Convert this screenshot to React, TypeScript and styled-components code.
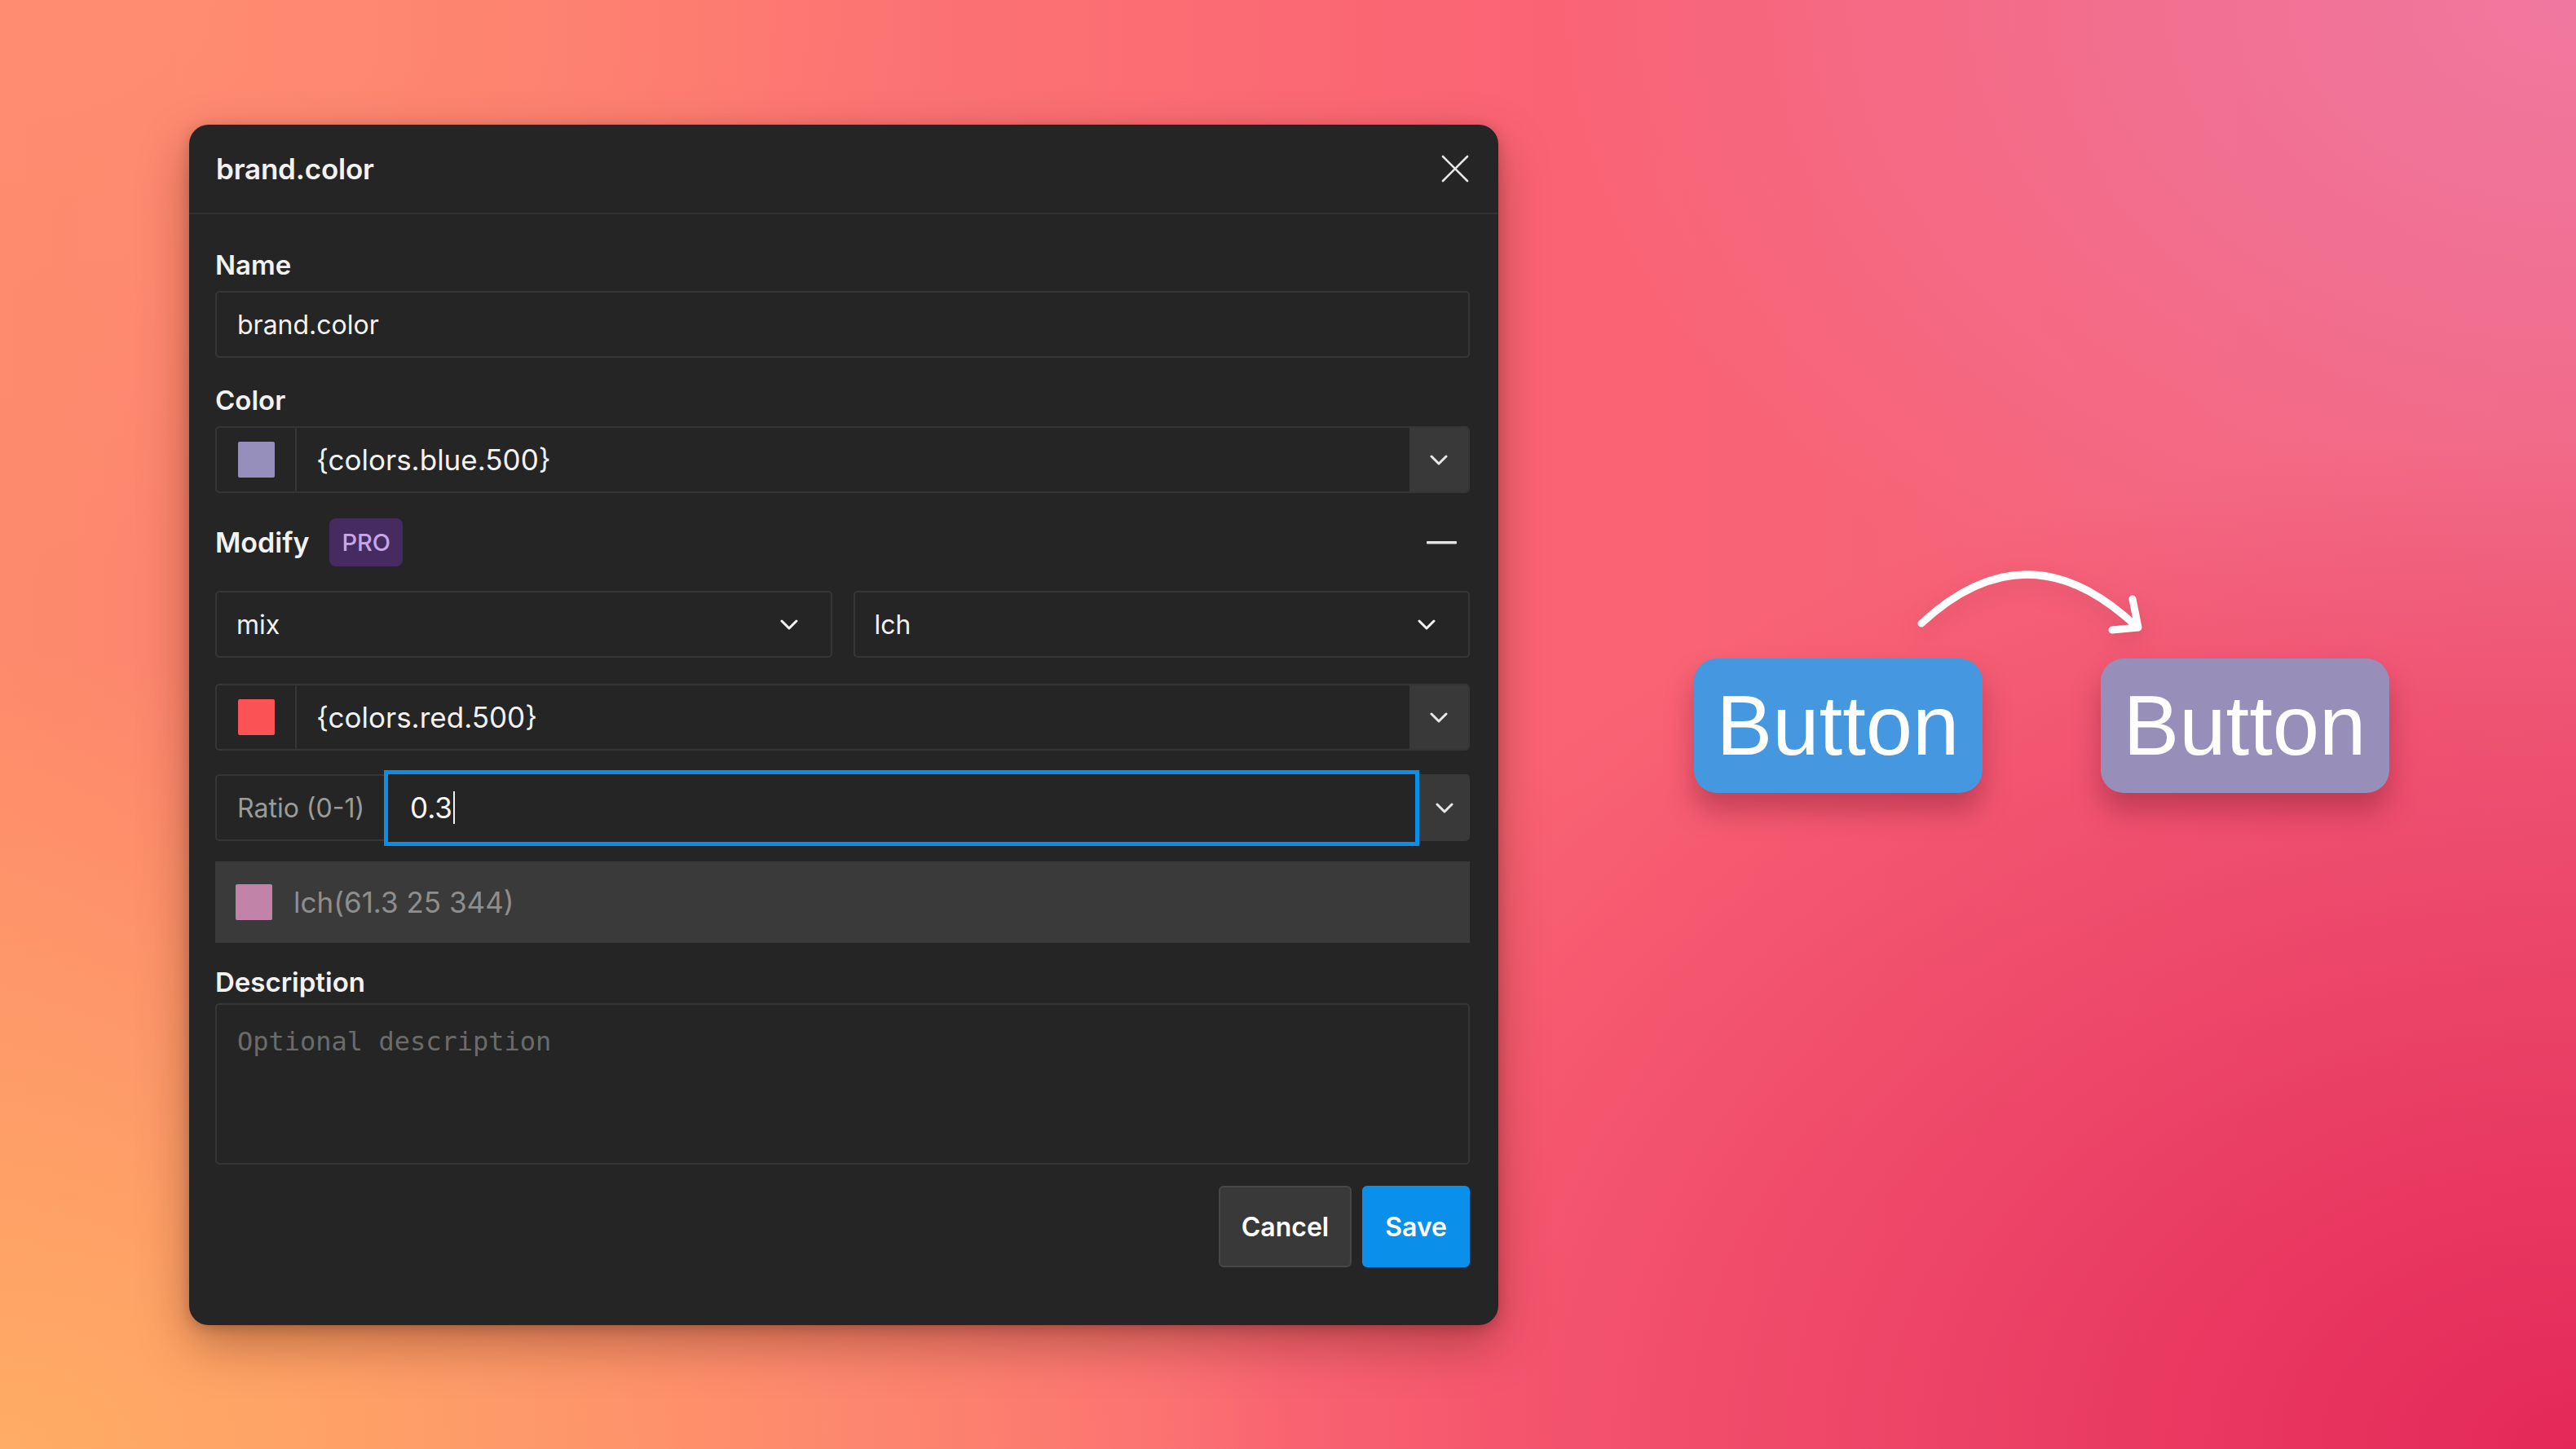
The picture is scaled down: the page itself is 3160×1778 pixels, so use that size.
import React from "react";
import styled, { createGlobalStyle } from "styled-components";

const GlobalStyle = createGlobalStyle`
  html, body { margin: 0; padding: 0; }
  body { font-family: Inter, "Noto Sans", "Liberation Sans", sans-serif; }
  * { box-sizing: border-box; }
`;

const Page = styled.div`
  width: 3160px;
  height: 1778px;
  overflow: hidden;
  display: flex;
  align-items: flex-start;
  padding: 153px 0 0 232px;
  background:
    radial-gradient(ellipse 50% 55% at 0% 100%, rgba(255, 172, 100, 1) 0%, rgba(255, 172, 100, 0) 100%),
    radial-gradient(ellipse 55% 70% at 100% 100%, rgba(228, 40, 88, 1) 0%, rgba(228, 40, 88, 0) 100%),
    radial-gradient(ellipse 40% 50% at 100% 0%, rgba(240, 120, 160, 1) 0%, rgba(240, 120, 160, 0) 100%),
    radial-gradient(ellipse 35% 40% at 0% 0%, rgba(255, 140, 112, 1) 0%, rgba(255, 140, 112, 0) 100%),
    linear-gradient(90deg, #fd8a6c 0%, #fc7672 30%, #fa6374 60%, #f2637c 100%);
`;

const Dialog = styled.div`
  width: 1606px;
  background: #252525;
  border-radius: 24px;
  box-shadow: 0 24px 60px rgba(70, 20, 10, 0.35), 0 4px 16px rgba(0, 0, 0, 0.2);
  display: flex;
  flex-direction: column;
  overflow: hidden;
`;

const Header = styled.div`
  height: 110px;
  display: flex;
  align-items: center;
  justify-content: space-between;
  padding: 0 36px 0 33px;
  border-bottom: 2px solid #323232;
`;

const Title = styled.div`
  color: #f2f2f2;
  font-size: 35px;
  font-weight: 600;
  letter-spacing: -0.2px;
`;

const IconButton = styled.div`
  display: flex;
  align-items: center;
  justify-content: center;
  color: #e6e6e6;
`;

const Body = styled.div`
  display: flex;
  flex-direction: column;
  padding: 42px 35px 71px 32px;
`;

const FieldLabel = styled.div<{ $mt?: number }>`
  margin-top: ${(p) => p.$mt ?? 0}px;
  color: #f2f2f2;
  font-size: 33px;
  font-weight: 600;
  line-height: 40px;
`;

const TextInput = styled.input<{ $mt?: number }>`
  margin-top: ${(p) => p.$mt ?? 0}px;
  height: 82px;
  width: 100%;
  background: #252525;
  border: 2px solid #363636;
  border-radius: 5px;
  padding: 0 25px;
  color: #f2f2f2;
  font-family: Inter, "Noto Sans", sans-serif;
  font-size: 32px;
  outline: none;
`;

const ComboField = styled.div<{ $mt?: number }>`
  margin-top: ${(p) => p.$mt ?? 0}px;
  height: 82px;
  display: flex;
  align-items: stretch;
  border: 2px solid #363636;
  border-radius: 5px;
  overflow: hidden;
`;

const SwatchCell = styled.div`
  width: 98px;
  display: flex;
  align-items: center;
  justify-content: center;
  border-right: 2px solid #363636;
`;

const Swatch = styled.div<{ $color: string }>`
  width: 45px;
  height: 44px;
  border-radius: 2px;
  background: ${(p) => p.$color};
`;

const ValueText = styled.div`
  flex: 1;
  display: flex;
  align-items: center;
  padding-left: 24px;
  color: #f2f2f2;
  font-size: 35px;
`;

const DropCell = styled.div<{ $w: number }>`
  width: ${(p) => p.$w}px;
  background: #393939;
  display: flex;
  align-items: center;
  justify-content: center;
  color: #e8e8e8;
`;

const ModifyRow = styled.div<{ $mt?: number }>`
  margin-top: ${(p) => p.$mt ?? 0}px;
  height: 59px;
  display: flex;
  align-items: center;
  justify-content: space-between;
`;

const ModifyLeft = styled.div`
  display: flex;
  align-items: center;
  gap: 25px;
`;

const ModifyTitle = styled.div`
  color: #f2f2f2;
  font-size: 34px;
  font-weight: 600;
`;

const ProBadge = styled.div`
  height: 59px;
  padding: 0 15px;
  border-radius: 8px;
  background: #452b5f;
  color: #c9a6e8;
  font-size: 29px;
  font-weight: 500;
  display: flex;
  align-items: center;
`;

const MinusButton = styled.div`
  margin-right: 16px;
  display: flex;
  align-items: center;
`;

const SelectRow = styled.div<{ $mt?: number }>`
  margin-top: ${(p) => p.$mt ?? 0}px;
  display: grid;
  grid-template-columns: 1fr 1fr;
  gap: 26px;
`;

const Select = styled.div`
  height: 82px;
  border: 2px solid #363636;
  border-radius: 5px;
  display: flex;
  align-items: center;
  justify-content: space-between;
  padding: 0 40px 0 24px;
  color: #f2f2f2;
  font-size: 32px;
`;

const RatioRow = styled.div<{ $mt?: number }>`
  margin-top: ${(p) => p.$mt ?? 0}px;
  height: 82px;
  display: flex;
  align-items: center;
`;

const RatioLabel = styled.div`
  width: 207px;
  height: 82px;
  border: 2px solid #363636;
  border-right: none;
  border-radius: 5px 0 0 5px;
  display: flex;
  align-items: center;
  padding-left: 25px;
  color: #9b9b9b;
  font-size: 32px;
`;

const FocusedInput = styled.div`
  flex: 1;
  height: 93px;
  border: 5px solid #0a8fe9;
  background: #252525;
  display: flex;
  align-items: center;
  padding-left: 27px;
  color: #f7f7f7;
  font-size: 35px;
`;

const Caret = styled.span`
  display: inline-block;
  width: 2px;
  height: 40px;
  margin-left: 1px;
  background: #f2f2f2;
`;

const RatioDrop = styled(DropCell)`
  height: 82px;
  border-radius: 0 5px 5px 0;
`;

const ResultRow = styled.div<{ $mt?: number }>`
  margin-top: ${(p) => p.$mt ?? 0}px;
  height: 100px;
  background: #3a3a3a;
  display: flex;
  align-items: center;
  gap: 26px;
  padding-left: 25px;
  color: #8e8e8e;
  font-size: 35px;
`;

const TextArea = styled.textarea<{ $mt?: number }>`
  margin-top: ${(p) => p.$mt ?? 0}px;
  height: 198px;
  width: 100%;
  resize: none;
  background: #252525;
  border: 2px solid #363636;
  border-radius: 5px;
  padding: 25px 25px;
  color: #f2f2f2;
  font-family: "DejaVu Sans Mono", "Liberation Mono", monospace;
  font-size: 32px;
  line-height: 40px;
  outline: none;
  &::placeholder {
    color: #6b6b6b;
  }
`;

const Footer = styled.div<{ $mt?: number }>`
  margin-top: ${(p) => p.$mt ?? 0}px;
  display: flex;
  justify-content: flex-end;
  gap: 13px;
`;

const Button = styled.button<{ $primary?: boolean }>`
  height: 100px;
  padding: 0 26px;
  border-radius: 6px;
  border: 2px solid ${(p) => (p.$primary ? "#0a90ea" : "#474747")};
  background: ${(p) => (p.$primary ? "#0a90ea" : "#393939")};
  color: #ffffff;
  font-family: Inter, "Noto Sans", sans-serif;
  font-size: 32px;
  font-weight: 600;
`;

const Stage = styled.div`
  flex: 1;
  align-self: stretch;
  margin-top: -153px;
  display: flex;
  align-items: center;
  justify-content: center;
  padding-left: 10px;
`;

const Demo = styled.div`
  display: flex;
  flex-direction: column;
  align-items: stretch;
  padding-bottom: 120px;
`;

const ArrowSvg = styled.svg`
  display: block;
  overflow: visible;
  filter: drop-shadow(0 10px 12px rgba(120, 20, 40, 0.18));
`;

const DemoRow = styled.div`
  margin-top: 33px;
  display: flex;
  gap: 145px;
`;

const DemoButton = styled.div<{ $color: string }>`
  width: 354px;
  height: 165px;
  border-radius: 28px;
  background: ${(p) => p.$color};
  box-shadow: 0 22px 34px rgba(120, 25, 45, 0.4);
  display: flex;
  align-items: center;
  justify-content: center;
  color: #ffffff;
  font-family: "Liberation Sans", Arial, sans-serif;
  font-size: 103px;
`;

const Chevron = () => (
  <svg width="22" height="13" viewBox="0 0 22 13" fill="none">
    <path d="M2 2 L11 11 L20 2" stroke="currentColor" strokeWidth="3" strokeLinecap="round" strokeLinejoin="round" />
  </svg>
);

export default function App() {
  return (
    <>
      <GlobalStyle />
      <Page>
        <Dialog>
          <Header>
            <Title>brand.color</Title>
            <IconButton>
              <svg width="34" height="34" viewBox="0 0 34 34" fill="none">
                <path d="M2 2 L32 32 M32 2 L2 32" stroke="currentColor" strokeWidth="2.6" strokeLinecap="round" />
              </svg>
            </IconButton>
          </Header>
          <Body>
            <FieldLabel>Name</FieldLabel>
            <TextInput $mt={12} defaultValue="brand.color" readOnly />

            <FieldLabel $mt={32}>Color</FieldLabel>
            <ComboField $mt={12}>
              <SwatchCell>
                <Swatch $color="#978fbb" />
              </SwatchCell>
              <ValueText>{"{colors.blue.500}"}</ValueText>
              <DropCell $w={72}>
                <Chevron />
              </DropCell>
            </ComboField>

            <ModifyRow $mt={31}>
              <ModifyLeft>
                <ModifyTitle>Modify</ModifyTitle>
                <ProBadge>PRO</ProBadge>
              </ModifyLeft>
              <MinusButton>
                <svg width="37" height="4" viewBox="0 0 37 4">
                  <rect x="0" y="0" width="37" height="3.5" rx="1" fill="#e4e4e4" />
                </svg>
              </MinusButton>
            </ModifyRow>

            <SelectRow $mt={30}>
              <Select>
                <span>mix</span>
                <Chevron />
              </Select>
              <Select>
                <span>lch</span>
                <Chevron />
              </Select>
            </SelectRow>

            <ComboField $mt={32}>
              <SwatchCell>
                <Swatch $color="#fb5255" />
              </SwatchCell>
              <ValueText>{"{colors.red.500}"}</ValueText>
              <DropCell $w={72}>
                <Chevron />
              </DropCell>
            </ComboField>

            <RatioRow $mt={29}>
              <RatioLabel>Ratio (0-1)</RatioLabel>
              <FocusedInput>
                0.3
                <Caret />
              </FocusedInput>
              <RatioDrop $w={62}>
                <Chevron />
              </RatioDrop>
            </RatioRow>

            <ResultRow $mt={25}>
              <Swatch $color="#c283a8" />
              <span>lch(61.3 25 344)</span>
            </ResultRow>

            <FieldLabel $mt={28}>Description</FieldLabel>
            <TextArea $mt={6} placeholder="Optional description" />

            <Footer $mt={26}>
              <Button>Cancel</Button>
              <Button $primary>Save</Button>
            </Footer>
          </Body>
        </Dialog>

        <Stage>
          <Demo>
            <ArrowSvg width="852" height="90" viewBox="0 0 852 90" fill="none">
              <path d="M279 80 Q 410 -42 543 84" stroke="#ffffff" strokeWidth="9" strokeLinecap="round" fill="none" />
              <path d="M538 50 L545 85 L513 88" stroke="#ffffff" strokeWidth="9" strokeLinecap="round" strokeLinejoin="round" fill="none" />
            </ArrowSvg>
            <DemoRow>
              <DemoButton $color="#4598e0">Button</DemoButton>
              <DemoButton $color="#978fba">Button</DemoButton>
            </DemoRow>
          </Demo>
        </Stage>
      </Page>
    </>
  );
}
